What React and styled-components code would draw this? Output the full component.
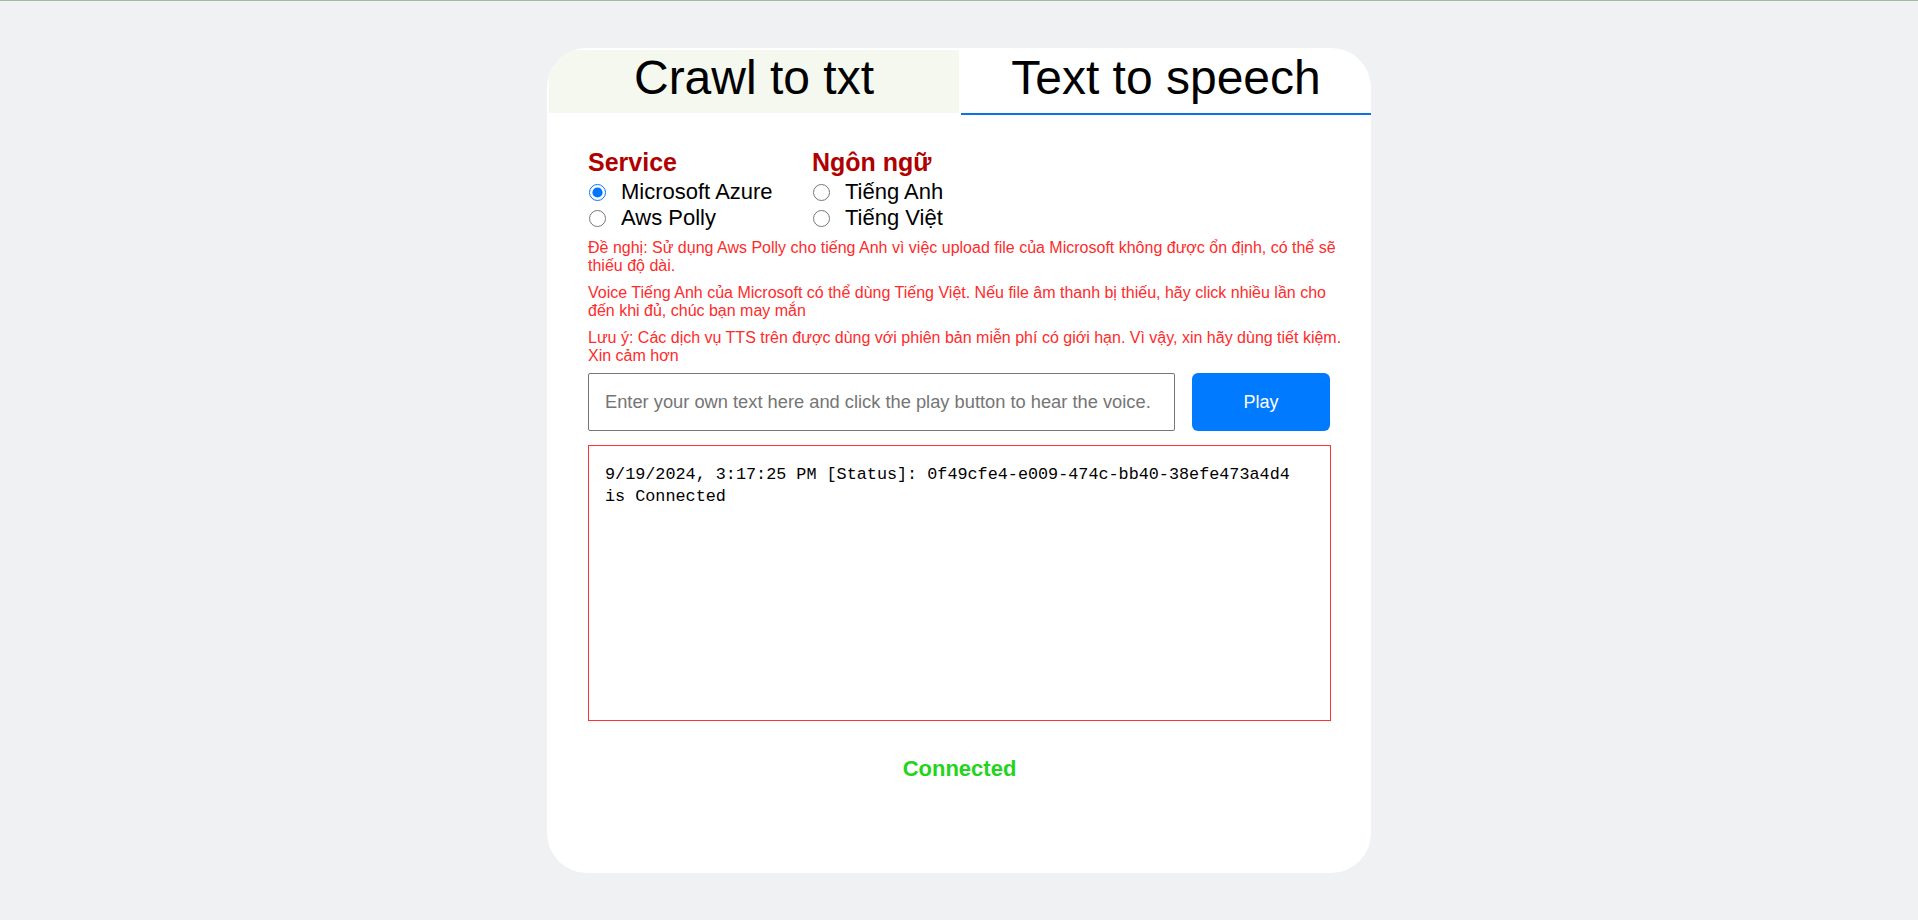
import React, { useState } from "react";
import styled, { createGlobalStyle } from "styled-components";

const GlobalStyle = createGlobalStyle`
    html, body {
        margin: 0;
        padding: 0;
    }
    body {
        background: #f0f1f3;
        border-top: 1px solid #a3b89f;
        font-family: "Liberation Sans", Arial, sans-serif;
        min-height: 919px;
    }
`;

const Card = styled.div`
    width: 824px;
    height: 825px;
    margin: 47px auto 0;
    background: #fff;
    border-radius: 40px;
    overflow: hidden;
`;

const TabBar = styled.div`
    display: flex;
    gap: 2px;
    padding: 2px 0 0 2px;
`;

const Tab = styled.div`
    flex: 1;
    height: ${props => (props.active ? "65px" : "63px")};
    padding-top: 1px;
    box-sizing: border-box;
    text-align: center;
    font-size: 48px;
    line-height: 54px;
    color: #000;
    cursor: pointer;
    background: ${props => (props.active ? "#fff" : "#f5f8ef")};
    border-bottom: ${props => (props.active ? "2px solid #0a74e6" : "none")};
`;

const Body = styled.div`
    padding: 33px 6px 0 41px;
`;

const Options = styled.div`
    display: flex;
`;

const OptionGroup = styled.div`
    width: ${props => props.width || "auto"};
`;

const GroupTitle = styled.div`
    font-size: 25px;
    font-weight: bold;
    line-height: 28px;
    color: #b00000;
    margin-bottom: 3px;
`;

const OptionRow = styled.label`
    display: flex;
    align-items: center;
    height: 26px;
    font-size: 22px;
    color: #000;
    cursor: pointer;
`;

const Radio = styled.input.attrs({ type: "radio" })`
    width: 17px;
    height: 17px;
    margin: 1px 15px 0 1px;
`;

const Notes = styled.div`
    margin-top: 8px;
`;

const Note = styled.p`
    margin: 0 0 8px;
    font-size: 16px;
    line-height: 18.4px;
    color: #ff2b2b;
`;

const InputRow = styled.div`
    display: flex;
    gap: 17px;
    width: 743px;
    margin-top: 1px;
`;

const TextInput = styled.input`
    width: 587px;
    height: 58px;
    box-sizing: border-box;
    padding: 0 16px;
    border: 1px solid #767676;
    border-radius: 2px;
    font-family: "Liberation Sans", Arial, sans-serif;
    font-size: 18.3px;
    color: #000;
    &::placeholder {
        color: #757575;
    }
`;

const PlayButton = styled.button`
    width: 138px;
    height: 58px;
    border: none;
    border-radius: 6px;
    background-color: #007bff;
    color: #fff;
    font-family: "Liberation Sans", Arial, sans-serif;
    font-size: 18px;
    cursor: pointer;
`;

const LogBox = styled.div`
    width: 743px;
    height: 276px;
    box-sizing: border-box;
    margin-top: 14px;
    padding: 18px 22px 18px 16px;
    border: 1px solid #f33;
    font-family: "Liberation Mono", "DejaVu Sans Mono", monospace;
    font-size: 16.8px;
    line-height: 22px;
    color: #000;
    overflow-y: auto;
    word-wrap: break-word;
`;

const Status = styled.div`
    width: 743px;
    margin-top: 36px;
    text-align: center;
    font-size: 22px;
    font-weight: bold;
    line-height: 24px;
    color: ${props => (props.connected ? "#22d41c" : "#e22")};
`;

const App = () => {
    const [service, setService] = useState("azure");
    const [lang, setLang] = useState(null);
    const [text, setText] = useState("");

    return (
        <>
            <GlobalStyle />
            <Card>
                <TabBar>
                    <Tab>Crawl to txt</Tab>
                    <Tab active>Text to speech</Tab>
                </TabBar>
                <Body>
                    <Options>
                        <OptionGroup width="224px">
                            <GroupTitle>Service</GroupTitle>
                            <OptionRow>
                                <Radio name="service" checked={service === "azure"} onChange={() => setService("azure")} />
                                Microsoft Azure
                            </OptionRow>
                            <OptionRow>
                                <Radio name="service" checked={service === "polly"} onChange={() => setService("polly")} />
                                Aws Polly
                            </OptionRow>
                        </OptionGroup>
                        <OptionGroup>
                            <GroupTitle>Ngôn ngữ</GroupTitle>
                            <OptionRow>
                                <Radio name="lang" checked={lang === "en"} onChange={() => setLang("en")} />
                                Tiếng Anh
                            </OptionRow>
                            <OptionRow>
                                <Radio name="lang" checked={lang === "vi"} onChange={() => setLang("vi")} />
                                Tiếng Việt
                            </OptionRow>
                        </OptionGroup>
                    </Options>
                    <Notes>
                        <Note>Đề nghị: Sử dụng Aws Polly cho tiếng Anh vì việc upload file của Microsoft không được ổn định, có thể sẽ thiếu độ dài.</Note>
                        <Note>Voice Tiếng Anh của Microsoft có thể dùng Tiếng Việt. Nếu file âm thanh bị thiếu, hãy click nhiều lần cho<br />đến khi đủ, chúc bạn may mắn</Note>
                        <Note>Lưu ý: Các dịch vụ TTS trên được dùng với phiên bản miễn phí có giới hạn. Vì vậy, xin hãy dùng tiết kiệm. Xin cảm hơn</Note>
                    </Notes>
                    <InputRow>
                        <TextInput
                            value={text}
                            onChange={e => setText(e.target.value)}
                            placeholder="Enter your own text here and click the play button to hear the voice."
                        />
                        <PlayButton>Play</PlayButton>
                    </InputRow>
                    <LogBox>
                        9/19/2024, 3:17:25 PM [Status]: 0f49cfe4-e009-474c-bb40-38efe473a4d4 is Connected
                    </LogBox>
                    <Status connected>Connected</Status>
                </Body>
            </Card>
        </>
    );
};

export default App;
